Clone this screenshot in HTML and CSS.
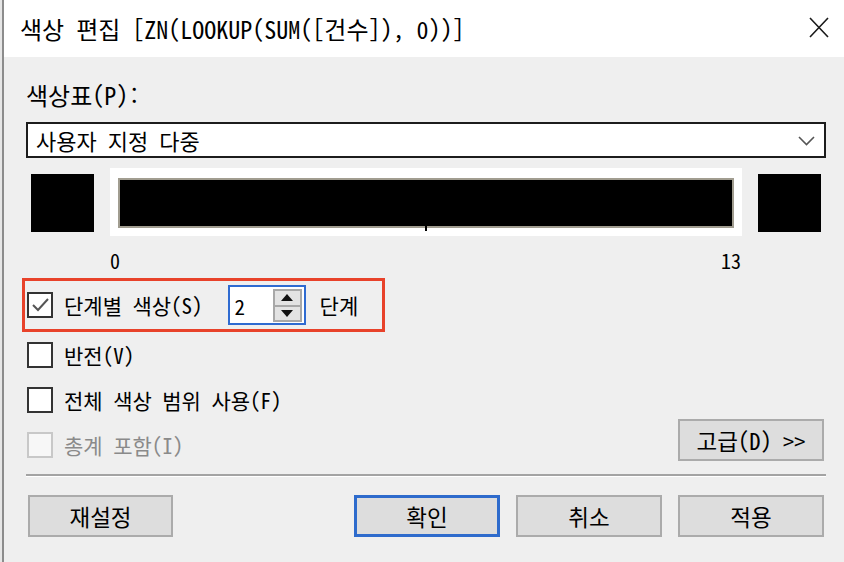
FILE: index.html
```html
<!DOCTYPE html>
<html lang="ko">
<head>
<meta charset="utf-8">
<title>색상 편집</title>
<link rel="stylesheet" href="styles.css">
</head>
<body>
<div class="window">
  <div class="titlebar">
    <span class="title">색상 편집 [ZN(LOOKUP(SUM([건수]), 0))]</span>
    <svg class="close" width="20" height="21" viewBox="0 0 20 21"><path d="M1 1 L19 20 M19 1 L1 20" stroke="#1a1a1a" stroke-width="1.6" fill="none"/></svg>
  </div>
  <div class="content">
    <div class="label">색상표(P):</div>
    <div class="select">
      <span>사용자 지정 다중</span>
      <svg class="chevron" width="17" height="10" viewBox="0 0 17 10"><path d="M1 1 L8.5 8.5 L16 1" stroke="#555" stroke-width="1.6" fill="none"/></svg>
    </div>
    <div class="ramp">
      <div class="swatch"></div>
      <div class="bar-frame">
        <div class="bar"></div>
        <div class="tick"></div>
      </div>
      <div class="swatch"></div>
    </div>
    <div class="scale">
      <span class="scale-cell"><span>0</span><span>13</span></span>
    </div>
    <div class="options">
      <div class="checks">
        <div class="highlight">
          <span class="box checked"><svg width="22" height="22" viewBox="0 0 22 22"><path d="M4 11 L9 16 L19 5" stroke="#555" stroke-width="2" fill="none"/></svg></span>
          <span class="text">단계별 색상(S)</span>
          <span class="spin">
            <span class="spin-value">2</span>
            <span class="spin-btns">
              <span class="spin-btn"><svg width="12" height="7" viewBox="0 0 12 7"><path d="M6 0 L12 7 L0 7 Z" fill="#111"/></svg></span>
              <span class="spin-btn"><svg width="12" height="7" viewBox="0 0 12 7"><path d="M0 0 L12 0 L6 7 Z" fill="#111"/></svg></span>
            </span>
          </span>
          <span class="text steps">단계</span>
        </div>
        <div class="row"><span class="box"></span><span class="text">반전(V)</span></div>
        <div class="row"><span class="box"></span><span class="text">전체 색상 범위 사용(F)</span></div>
        <div class="row disabled"><span class="box"></span><span class="text">총계 포함(I)</span></div>
      </div>
      <button class="btn advanced">고급(D) &gt;&gt;</button>
    </div>
    <div class="sep"></div>
    <div class="footer">
      <button class="btn reset">재설정</button>
      <div class="spacer"></div>
      <button class="btn primary">확인</button>
      <button class="btn">취소</button>
      <button class="btn">적용</button>
    </div>
  </div>
</div>
</body>
</html>
```
FILE: styles.css
```css
* { box-sizing: border-box; }
html, body {
  margin: 0;
  padding: 0;
  width: 844px;
  height: 562px;
  overflow: hidden;
  background: #e6e6e6;
}
body {
  font-family: "Noto Sans Mono CJK KR", "Noto Sans CJK KR", "Noto Sans", monospace;
  color: #000;
}
.window {
  width: 842px;
  height: 562px;
  margin-left: 2px;
  border-left: 2px solid #8c8c8c;
  background: #efefef;
  display: flex;
  flex-direction: column;
}
.titlebar {
  height: 57px;
  background: #fff;
  display: flex;
  align-items: center;
  justify-content: space-between;
  padding: 0 15px 0 16px;
}
.title {
  font-size: 24px;
  line-height: 28px;
  margin-top: 0;
}
.close { margin-top: -2px; }
.content {
  padding: 0 18px 0 22px;
  display: flex;
  flex-direction: column;
}
.label {
  margin-top: 25px;
  font-size: 24px;
  line-height: 26px;
}
.select {
  margin-top: 14px;
  height: 36px;
  border: 2px solid #1c1c1c;
  background: #fff;
  display: flex;
  align-items: center;
  justify-content: space-between;
  padding: 0 9px 0 8px;
  font-size: 22px;
}
.chevron { margin-top: 2px; }
.ramp {
  margin-top: 10px;
  display: grid;
  grid-template-columns: 63px 1fr 63px;
  column-gap: 16px;
  padding: 0 5px;
  align-items: center;
}
.swatch {
  height: 58px;
  background: #000;
  margin-top: 2px;
}
.bar-frame {
  height: 68px;
  background: #fff;
  padding: 10px 8px 0 8px;
  display: flex;
  flex-direction: column;
  align-items: center;
}
.bar {
  width: 100%;
  height: 50px;
  background: #000;
  border: 2px solid #a19d90;
}
.tick {
  width: 2px;
  height: 5px;
  margin-top: -2px;
  background: #000;
}
.scale {
  margin-top: 14px;
  display: grid;
  grid-template-columns: 63px 1fr 63px;
  column-gap: 16px;
  padding: 0 5px;
}
.scale-cell {
  grid-column: 2;
  display: flex;
  justify-content: space-between;
  font-size: 20px;
  line-height: 22px;
  padding-right: 1px;
}
.options {
  margin-top: 6px;
  display: flex;
  justify-content: space-between;
  align-items: flex-end;
}
.checks {
  display: flex;
  flex-direction: column;
}
.highlight {
  margin-left: -4px;
  width: 363px;
  height: 54px;
  border: 3px solid #e8422a;
  display: flex;
  align-items: center;
  padding-left: 2px;
}
.row {
  height: 45px;
  display: flex;
  align-items: center;
  padding-left: 1px;
}
.box {
  width: 26px;
  height: 26px;
  border: 2px solid #333;
  background: #fff;
  display: flex;
  align-items: center;
  justify-content: center;
  flex: none;
}
.text {
  margin-left: 11px;
  font-size: 21px;
  line-height: 24px;
  white-space: nowrap;
}
.disabled .box {
  border-color: #c8c8c8;
  background: #f7f7f7;
}
.disabled .text { color: #8a8a8a; }
.spin {
  margin-left: 25px;
  width: 78px;
  height: 40px;
  border: 2px solid #2f6bd1;
  background: #fff;
  display: flex;
  align-items: center;
  justify-content: space-between;
  padding: 2px 2px 1px 5px;
  align-self: center;
  flex: none;
}
.spin-value {
  font-size: 21px;
  line-height: 24px;
}
.spin-btns {
  width: 29px;
  height: 33px;
  border: 2px solid #a8a8a8;
  background: #e3e3e3;
  display: flex;
  flex-direction: column;
}
.spin-btn {
  flex: 1;
  display: flex;
  align-items: center;
  justify-content: center;
}
.spin-btn + .spin-btn { border-top: 2px solid #a8a8a8; }
.steps { margin-left: 14px; }
.btn {
  font-family: "Noto Sans Mono CJK KR", "Noto Sans CJK KR", "Noto Sans", monospace;
  font-size: 22.5px;
  color: #000;
  height: 42px;
  width: 146px;
  background: #dddddd;
  border: 2px solid #ababab;
  padding: 0;
  display: flex;
  align-items: center;
  justify-content: center;
}
.advanced {
  margin-right: 2px;
  margin-bottom: 6px;
}
.sep {
  margin-top: 7px;
  height: 3px;
  border-top: 2px solid #a3a3a3;
  border-bottom: 1px solid #fff;
}
.footer {
  margin-top: 18px;
  display: flex;
  gap: 16px;
  padding: 0 2px;
}
.reset { width: 145px; }
.spacer { flex: 1; }
.primary { border: 3px solid #2e6bcc; }
```
